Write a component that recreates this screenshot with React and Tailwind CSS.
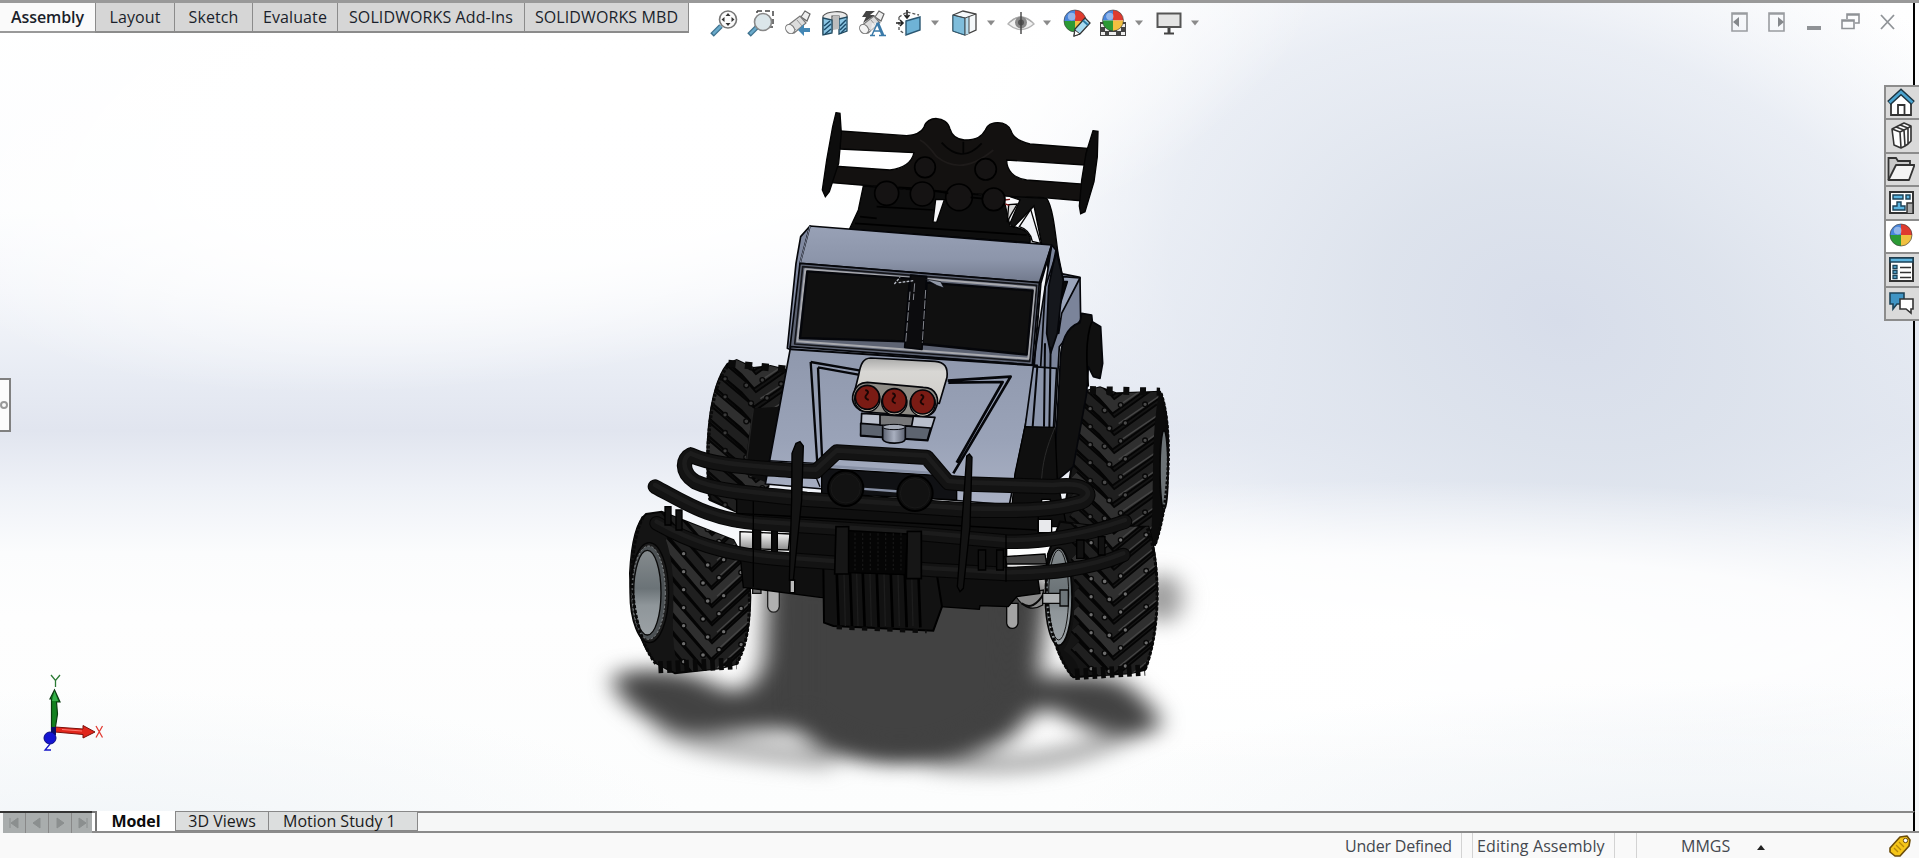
import React from "react";

/* ---------- scene ---------- */

const FL_TYRE = "M78,522 L125,515 L200,545 L340,600 C375,660 396,720 390,800 C388,880 370,930 350,972 L300,985 L165,1000 L110,970 C60,920 30,810 30,700 C35,600 50,545 78,522 Z";
const RL_TYRE = "M322,72 L350,60 L400,84 L452,78 L500,90 L445,440 L360,520 L270,480 C252,350 262,150 322,72 Z";
const RR_TYRE = "M560,152 L600,142 L650,160 L700,158 L780,155 C815,230 815,470 765,615 L480,590 L520,350 Z";
const FR_TYRE = "M445,640 L480,545 L600,560 L745,560 C778,660 785,860 735,990 L690,1000 L520,1012 C450,930 425,760 445,640 Z";

function Tread({ x0, x1, x2, dl, dr, from, to, step = 54, clip, dotColor = "#6e6e6e" }) {
  const rows = [];
  for (let y = from; y < to; y += step) rows.push(y);
  return (
    <g clipPath={`url(#${clip})`}>
      {rows.map((y, i) => (
        <g key={y}>
          <path
            d={`M${x0},${y - 10} L${x1 - 30},${y + dl - 34} L${x1},${y + dl} L${x2},${y + dl - dr}`}
            fill="none"
            stroke="#050505"
            strokeWidth="38"
          />
          <path
            d={`M${x0},${y - 10} L${x1 - 30},${y + dl - 34} L${x1},${y + dl} L${x2},${y + dl - dr}`}
            fill="none"
            stroke={i % 3 === 1 ? "#2f2f2f" : "#1f1f1f"}
            strokeWidth="27"
          />
          <path d={`M${x0},${y + 8} L${x1 - 20},${y + dl + 2}`} stroke="#060606" strokeWidth="5" />
          <path d={`M${x1 + 16},${y + dl - 2} L${x2},${y + dl - dr + 14}`} stroke="#464646" strokeWidth="4" />
        </g>
      ))}
      {rows.map((y, i) => (
        <g key={y} fill={dotColor} stroke="#080808" strokeWidth="4">
          <circle cx={x0 + (x1 - x0) * 0.42} cy={y + dl * 0.42 + 14} r="7" />
          <circle cx={x1 - (i % 2 ? 26 : 12)} cy={y + dl + 12} r="7.500" />
          <circle cx={x1 + (i % 2 ? 22 : 36)} cy={y + dl - 4} r="7" />
          {i % 2 === 0 && <circle cx={x1 + (x2 - x1) * 0.68} cy={y + dl - dr * 0.68 + 8} r="7" />}
        </g>
      ))}
    </g>
  );
}

function Pipe({ d, w = 38 }) {
  return (
    <g fill="none" strokeLinecap="round" strokeLinejoin="round">
      <path d={d} stroke="#050505" strokeWidth={w} />
      <path d={d} stroke="#131313" strokeWidth={w - 6} />
      <path d={d} stroke="#1c1c1c" strokeWidth={w * 0.3} transform="translate(0 -5)" />
    </g>
  );
}

function Backdrop() {
  return (
    <g>
      <rect width="1919" height="812" fill="url(#sky)" />
      <rect width="1919" height="812" fill="url(#haze)" />
      <rect width="1919" height="812" fill="url(#glow)" />
      <rect width="1919" height="812" fill="url(#floor)" />
      <rect width="1919" height="812" fill="url(#cornerL)" />
      <rect width="1919" height="812" fill="url(#cornerR)" />
    </g>
  );
}

function GroundShadow() {
  return (
    <g transform="translate(580 560) scale(.40816 .33333)">
      <g filter="url(#soft)">
        <path d="M200,490 C280,570 440,570 620,600" fill="none" stroke="#777" strokeOpacity=".6" strokeWidth="60" />
        <path d="M850,600 C1050,630 1200,610 1370,500" fill="none" stroke="#777" strokeOpacity=".7" strokeWidth="50" />
        <ellipse cx="1425" cy="115" rx="50" ry="75" fill="#777" fillOpacity=".75" />
        <path
          d="M460,20 L1150,60 L1125,350 C1180,350 1270,335 1335,370 C1400,430 1440,490 1405,515 C1320,535 1230,510 1170,455 C1120,430 1090,480 1060,530 C980,580 900,605 780,610 C660,605 590,575 540,515 C440,495 330,535 240,515 C150,480 60,390 90,340 C180,320 270,330 330,375 C380,410 425,400 450,300 Z"
          fill="#424242"
        />
      </g>
      <path d="M540,60 L1070,60 L1050,440 C960,540 860,570 780,572 C680,565 610,520 540,450 Z" fill="#424242" filter="url(#soft)" />
    </g>
  );
}

function RearWheels() {
  return (
    <>
      <g transform="translate(620 340) scale(.33333)">
        <path d={RL_TYRE} fill="#141414" stroke="#050505" strokeWidth="6" />
        <Tread x0={250} x1={405} x2={520} dl={130} dr={80} from={-60} to={480} clip="rl" dotColor="#3a3a3a" />
        <path d="M325,70 L500,88" stroke="#0a0a0a" strokeWidth="22" strokeDasharray="22 28" />
        <path d="M322,80 C265,150 255,350 270,480" fill="none" stroke="#0a0a0a" strokeWidth="10" strokeDasharray="8 5" />
        <path d="M400,205 L480,200 L445,430 L370,400 Z" fill="#0e0e0e" />
        <path d="M400,205 L375,400" stroke="#222" strokeWidth="4" />
      </g>
      <g transform="translate(900 340) scale(.33333)">
        <path d={RR_TYRE} fill="#141414" stroke="#050505" strokeWidth="6" />
        <Tread x0={520} x1={640} x2={780} dl={105} dr={100} from={40} to={560} clip="rr" dotColor="#4a4a4a" />
        <path d="M570,150 L780,155" stroke="#0a0a0a" strokeWidth="24" strokeDasharray="18 32" />
        <path d="M776,165 C750,300 765,450 752,600 L770,610 C815,470 815,240 785,160 Z" fill="#0b0b0b" />
        <ellipse cx="792" cy="390" rx="12" ry="118" fill="#6c7376" stroke="#050505" strokeWidth="5" />
        <path d="M783,160 C815,250 815,470 765,615" fill="none" stroke="#0a0a0a" strokeWidth="9" strokeDasharray="9 5" />
      </g>
    </>
  );
}

function Spoiler() {
  return (
    <g transform="translate(780 100) scale(.33333)" stroke="#030303" strokeWidth="4">
      <path d="M250,258 L235,330 L208,388 L750,428 C755,400 735,385 690,378 L670,290 Z" fill="#0e0e0e" />
      <path d="M690,290 L800,295 C818,320 825,390 834,460 L848,530 L820,560 L785,432 L762,318 L700,382 L690,370 L720,300 Z" fill="#121212" />
      <path d="M752,328 L782,430 L757,424 C752,400 735,385 718,380 Z" fill="#f2f4f8" />
      <path d="M686,314 L712,312 L692,346 L682,366 Z" fill="#d8d8d8" />
      <path d="M674,300 L690,298 M676,312 L688,316" stroke="#7b1818" strokeWidth="4" />
      <path d="M180,93 L380,107 C410,105 425,95 432,82 C440,46 500,46 510,87 C515,105 530,118 553,120 C590,120 605,110 616,90 C625,60 680,60 693,92 C698,110 720,125 750,132 L922,145 L915,195 L680,180 C680,210 700,235 740,240 L908,252 L902,302 L780,292 L700,290 L280,258 L155,248 L158,198 L330,210 C370,205 395,190 402,158 L180,147 Z" fill="#131110" />
      <path d="M168,38 L180,40 L184,100 L176,190 L148,275 L136,290 L127,270 L140,180 L158,80 Z" fill="#0d0d0d" />
      <path d="M939,92 L954,94 L952,170 L942,245 L915,335 L902,341 L898,318 L905,240 L918,160 Z" fill="#0d0d0d" />
      <path d="M470,170 Q545,230 640,150 M420,120 Q440,130 470,170" fill="none" stroke="#1e1b1a" strokeWidth="5" />
      <path d="M485,128 Q545,195 605,130 M550,125 V160" fill="none" strokeWidth="5" />
      {[[435, 202, 31], [617, 208, 32], [320, 280, 36], [427, 282, 36], [537, 292, 40], [641, 298, 34]].map(([x, y, r]) => (
        <circle key={x} cx={x} cy={y} r={r} fill="#151313" stroke="#000" strokeWidth="5" />
      ))}
      <path d="M290,320 L460,330 M240,350 L290,355 M225,370 L740,405 M355,262 L395,264 M465,272 L505,280 M572,292 L608,296" stroke="#000" strokeWidth="5" />
      <path d="M467,298 L493,299 L470,367 L459,366 Z" fill="#f6f6f8" />
    </g>
  );
}

function Cab() {
  return (
    <g transform="translate(780 100) scale(.33333)" stroke="#05060a" strokeWidth="5" strokeLinejoin="round">
      <path d="M815,435 L832,455 L840,520 L900,532 L902,660 L838,740 L820,1060 L750,1000 L760,790 Z" fill="#7b849a" />
      <path d="M850,530 L900,534 L845,640 L836,700 L838,560 Z" fill="#9aa4ba" />
      <path d="M848,545 L862,545 L838,620 Z" fill="#0b0b0b" />
      <path d="M828,450 L850,540 L832,700 L812,760 L800,700 L806,560 Z" fill="#15171c" />
      <path d="M905,640 L935,645 L937,665 L962,680 L968,790 L960,835 L940,830 L925,800 L920,880 L880,1100 L820,1150 L840,800 C840,720 860,680 900,668 Z" fill="#101010" />
      <path d="M935,665 C915,720 920,790 925,860" fill="none" stroke="#000" />
      <path d="M90,378 L62,410 L48,490 L22,745 L34,750 L62,492 Z" fill="#8089a0" />
      <path d="M90,378 L815,435 L778,548 L60,490 Z" fill="url(#roof)" />
      <path d="M90,378 L60,490" stroke="#8089a0" strokeWidth="3" />
      <path d="M60,490 L778,548 L757,795 L30,742 Z" fill="#5d6373" />
      <path d="M68,500 L770,556 L749,784 L44,732 Z" fill="none" stroke="#15161a" strokeWidth="5" />
      <path d="M76,508 L764,563 L745,776 L52,724 Z" fill="none" stroke="#a8a9ae" strokeWidth="6" />
      <path d="M82,514 L390,536 L374,724 L60,714 Z" fill="#101010" strokeWidth="7" />
      <path d="M440,548 L758,572 L740,764 L426,732 Z" fill="#101010" strokeWidth="7" />
      <path d="M392,525 L440,530 L426,748 L374,742 Z" fill="#0c0c0e" />
      <path d="M390,575 L377,728 M404,550 L400,600 M437,570 L427,728" stroke="#85878e" strokeWidth="3" strokeDasharray="26 5" />
      <path d="M343,552 L360,532 M356,548 L400,542" stroke="#b8bcc6" strokeWidth="4" strokeDasharray="8 4" />
      <path d="M436,537 L482,545 L492,564 L470,556 Z" fill="#9299a8" strokeWidth="2" />
      <path d="M815,435 L782,550 L762,800" fill="none" strokeWidth="6" />
      <path d="M832,452 L796,560 L782,800" fill="none" />
    </g>
  );
}

function Hood() {
  return (
    <g transform="translate(620 340) scale(.33333)" stroke="#05060a" strokeWidth="5" strokeLinejoin="round">
      <path d="M512,20 L1252,76 L1168,495 L436,432 Z" fill="url(#hood)" />
      <path d="M1240,80 L1310,85 L1300,270 L1210,300 Z" fill="#8b95ab" />
      <path d="M1252,80 L1238,260 M1275,10 L1272,260 M1292,20 L1288,270" strokeWidth="6" />
      <path d="M512,28 L1240,76" strokeWidth="6" />
      <path d="M572,66 L592,372 M594,82 L606,350 M572,66 L722,92 M594,82 L715,104" fill="none" strokeWidth="7" />
      <path d="M983,122 L1172,110 L1000,400 M985,128 L1148,126 L1010,368" fill="none" strokeWidth="8" />
      <path d="M445,362 L590,370 M575,380 L600,440" strokeWidth="4" />
      <path d="M725,220 L945,232 L923,302 L722,288 Z" fill="#b9bfcc" />
      <path d="M722,250 L800,256 L795,292 L722,286 Z M855,258 L932,264 L922,300 L850,296 Z" fill="#5d6470" />
      <path d="M780,224 L880,230 L875,258 L780,255 Z" fill="#77787a" />
      <path d="M788,258 H856 V298 C850,314 795,312 788,298 Z" fill="url(#steel)" />
      <ellipse cx="822" cy="261" rx="34" ry="8" fill="#a3a9b5" strokeWidth="3" />
      <path d="M752,54 L945,64 C974,66 984,82 981,112 L958,190 L700,170 L716,105 C722,70 730,55 752,54 Z" fill="url(#scoop)" />
      <path d="M742,127 L910,142 C950,142 962,180 945,210 C935,228 915,230 900,228 L740,216 C706,212 692,185 700,160 C706,140 720,127 742,127 Z" fill="#8e8c86" />
      {[[742, 172], [823, 182], [908, 186]].map(([x, y]) => (
        <g key={x}>
          <circle cx={x} cy={y + 5} r="38" fill="#d5cfc0" strokeWidth="4" />
          <circle cx={x} cy={y} r="36" fill="#7a1b14" strokeWidth="5" />
          <path d={`M${x - 6},${y - 22} q14,4 4,14 t6,16`} fill="none" stroke="#1a0504" strokeWidth="6" />
        </g>
      ))}
    </g>
  );
}

function FrontRight() {
  return (
    <g transform="translate(900 340) scale(.33333)">
      <path d="M375,260 L465,262 L472,420 L500,560 L330,560 L345,400 Z" fill="#0f0f0f" stroke="#000" strokeWidth="4" />
      <path d="M465,262 C440,320 425,370 424,440" fill="none" stroke="#2a2a2a" strokeWidth="3" />
      <path d={FR_TYRE} fill="#151515" stroke="#050505" strokeWidth="6" />
      <Tread x0={525} x1={640} x2={785} dl={110} dr={120} from={440} to={940} clip="fr" />
      <path d="M450,640 C470,600 505,620 520,700 C530,800 520,900 490,930 C540,960 540,1000 530,1010 C440,930 425,760 450,640 Z" fill="#101010" />
      <ellipse cx="476" cy="770" rx="40" ry="146" fill="url(#rim)" stroke="#050505" strokeWidth="5" />
      <ellipse cx="476" cy="765" rx="30" ry="135" fill="none" stroke="#111" strokeWidth="3" />
      <path d="M446,640 C425,760 450,930 520,1012 M742,565 C780,660 785,860 735,990" fill="none" stroke="#080808" strokeWidth="9" strokeDasharray="10 5" />
      <path d="M525,1003 L735,990" stroke="#080808" strokeWidth="34" strokeDasharray="14 12" />
      <g stroke="#080808" strokeWidth="4">
        <path d="M320,790 H354 V850 C350,870 324,870 320,850 Z" fill="#a4a4a4" />
        <path d="M345,765 L430,750 L428,795 C400,812 370,808 345,765 Z" fill="#8b8b8b" />
        <path d="M365,790 Q400,815 432,760" fill="none" strokeWidth="6" />
        <path d="M428,760 H485 V790 H428 Z" fill="#b0b3b5" />
        <path d="M480,750 H505 V798 H480 Z" fill="#6d7579" />
      </g>
    </g>
  );
}

function FrontLeft() {
  return (
    <g transform="translate(620 340) scale(.33333)">
      <path d={FL_TYRE} fill="#151515" stroke="#050505" strokeWidth="6" />
      <Tread x0={130} x1={275} x2={405} dl={155} dr={120} from={400} to={920} clip="fl" />
      <path d="M78,535 C150,545 165,700 160,800 C155,900 165,960 180,995 L120,980 C60,920 30,810 30,700 C35,600 50,545 78,535 Z" fill="#141414" />
      <ellipse cx="88" cy="758" rx="58" ry="150" fill="#1c1c1c" stroke="#050505" strokeWidth="4" />
      <ellipse cx="86" cy="758" rx="50" ry="140" fill="#4b5053" stroke="#7e8385" strokeWidth="3" strokeDasharray="8 5" />
      <ellipse cx="82" cy="758" rx="41" ry="127" fill="url(#rim)" stroke="#0a0a0a" strokeWidth="4" />
      <path d="M70,530 C20,620 20,860 110,975 M388,760 C390,860 378,920 350,972" fill="none" stroke="#080808" strokeWidth="9" strokeDasharray="10 5" />
      <path d="M115,982 L350,970" stroke="#080808" strokeWidth="36" strokeDasharray="14 12" />
      <path d="M443,745 H478 V800 C474,822 448,822 443,800 Z" fill="#b0b0b0" stroke="#222" strokeWidth="4" />
      <path d="M398,740 h25 v20 h-25 Z" fill="#666" stroke="#111" strokeWidth="4" />
    </g>
  );
}

function Bumper() {
  return (
    <g transform="translate(620 340) scale(.33333)" stroke="#000" strokeWidth="4">
      <path d="M605,385 L1010,410 L1010,480 L605,460 Z" fill="#101114" />
      <path d="M625,378 L980,402 M720,446 L860,456" stroke="#8790a5" strokeWidth="7" />
      <path d="M350,470 L1255,515 L1255,620 L350,560 Z" fill="#0f0f0f" />
      <path d="M360,575 L510,582 L505,630 L360,625 Z" fill="url(#chrome)" />
      <path d="M398,560 H422 V660 H398 Z M455,560 H472 V660 H455 Z" fill="#0b0b0b" />
      <path d="M510,560 L1160,590 L1160,720 L510,690 Z" fill="#0f0f0f" />
      <path d="M360,640 L1250,690 L1260,760 L1190,770 L1165,800 L1080,797 L1078,808 L960,800 L600,772 L370,742 Z" fill="#0f0f0f" />
      <path d="M510,720 h14 v38 h-14 Z" fill="#bbb" />
      <path d="M1154,650 L1275,642 L1280,672 L1160,672 Z" fill="#444" />
      <path d="M1265,478 h26 v18 h-26 Z M1255,538 h40 v40 h-40 Z" fill="#e8e9ec" />
      <path d="M610,675 L700,688 L950,700 L966,800 L940,872 L640,858 L612,848 Z" fill="#121212" strokeWidth="6" />
      {[650, 690, 728, 770, 812, 854, 895].map((x) => (
        <path key={x} d={`M${x},690 L${x + 6},${862}`} stroke="#000" strokeWidth="8" />
      ))}
      {[672, 710, 750, 792, 834, 875].map((x) => (
        <path key={x} d={`M${x},700 L${x + 4},${858}`} stroke="#1d1d1d" strokeWidth="4" />
      ))}
      <path d="M650,862 L920,874" stroke="#0a0a0a" strokeWidth="12" strokeDasharray="16 22" />
      <Pipe d="M105,440 C200,490 270,540 420,550 L900,582 L1160,605 C1270,608 1400,585 1515,545" w={44} />
      <Pipe d="M110,550 C200,600 300,645 500,658 L940,690 L1160,702 C1290,700 1400,690 1510,645" w={44} />
      <path d="M135,500 h18 v55 h-18 Z M168,510 h18 v60 h-18 Z M1370,600 h22 v55 h-22 Z M1435,590 h20 v55 h-20 Z" fill="#111" />
      <path d="M1075,630 h22 v60 h-22 Z M1130,630 h20 v60 h-20 Z" fill="#111" />
      <path d="M400,470 V740 M1158,585 V725 M350,520 L1250,570" stroke="#000" strokeWidth="4" fill="none" />
      <path d="M648,560 h38 v142 h-42 Z M862,574 h42 v142 h-45 Z" fill="#161616" strokeWidth="5" />
      <path d="M686,572 L862,582 L856,704 L686,698 Z" fill="#050505" />
      {[705, 728, 751, 774, 797, 820, 843].map((x) => (
        <path key={x} d={`M${x},580 V696`} stroke="#151515" strokeWidth="4" strokeDasharray="7 6" />
      ))}
      <Pipe d="M212,345 C280,378 400,382 520,392 L588,394 L650,336 L920,352 L985,428 L1040,432 L1300,440 C1420,425 1425,480 1370,490 C1320,505 1250,515 1040,510 L560,478 C400,460 290,455 225,425 C180,395 190,355 212,345" w={46} />
      <circle cx="677" cy="445" r="53" fill="#0e0e0e" strokeWidth="6" />
      <circle cx="677" cy="445" r="44" fill="#121212" stroke="#1c1c1c" strokeWidth="2" />
      <circle cx="885" cy="460" r="53" fill="#0e0e0e" strokeWidth="6" />
      <circle cx="885" cy="460" r="44" fill="#121212" stroke="#1c1c1c" strokeWidth="2" />
      <path d="M528,310 L540,305 L550,318 L545,480 L520,720 L508,720 L515,480 L516,340 Z" fill="#131313" />
      <path d="M1040,348 L1048,342 L1056,352 L1050,560 L1030,745 L1020,755 L1012,740 L1028,520 Z" fill="#131313" />
    </g>
  );
}

function Triad() {
  return (
    <g>
      <path d="M51.5,730 V699 H50 L54.5,690 L60,702 H56.5 L57.5,714 L55,730 Z" fill="#12801f" stroke="#0a3a10" strokeWidth="1.2" />
      <path d="M54.5,691 L58,701 H52 Z" fill="#35b04a" />
      <path d="M55,727 L83,729 L83,725.5 L95,732 L83,738 L83,734.5 L55,732 Z" fill="#e1261c" stroke="#7c0f0a" strokeWidth="1" />
      <path d="M62,729.5 L82,731" stroke="#ff7a70" />
      <path d="M51,727 h5 v8 h-5 Z" fill="#0b0b66" />
      <circle cx="50" cy="738" r="6" fill="#1414d2" stroke="#0a0a80" />
      <g fill="none" strokeWidth="1.300">
        <path d="M51,675 L55.500,680.500 L60,675 M55.500,680.500 V687" stroke="#2c7a35" />
        <path d="M96,726 L102.500,737.500 M102.500,726 L96,737.500" stroke="#e23b32" />
        <path d="M50,744 L45,750 H51" stroke="#1414c8" />
      </g>
    </g>
  );
}

function Scene() {
  return (
    <svg className="absolute inset-0 h-full w-full" viewBox="0 0 1919 811" preserveAspectRatio="none">
      <defs>
        <linearGradient id="sky" x1="0" y1="0" x2="0" y2="1">
          <stop offset="0" stopColor="#ffffff" />
          <stop offset=".26" stopColor="#fcfdfe" />
          <stop offset=".36" stopColor="#f4f6fa" />
          <stop offset=".46" stopColor="#e8ecf4" />
          <stop offset=".53" stopColor="#e1e5ef" />
          <stop offset=".6" stopColor="#eef1f7" />
          <stop offset=".68" stopColor="#fbfcfd" />
          <stop offset=".76" stopColor="#fefefe" />
          <stop offset="1" stopColor="#fcfdfd" />
        </linearGradient>
        <radialGradient id="glow" gradientUnits="userSpaceOnUse" cx="0" cy="0" r="1" gradientTransform="translate(620 90) rotate(-12) scale(720 270)">
          <stop offset="0" stopColor="#fff" />
          <stop offset=".6" stopColor="#fff" stopOpacity=".9" />
          <stop offset="1" stopColor="#fff" stopOpacity="0" />
        </radialGradient>
        <radialGradient id="haze" gradientUnits="userSpaceOnUse" cx="0" cy="0" r="1" gradientTransform="translate(1560 320) rotate(20) scale(620 430)">
          <stop offset="0" stopColor="#d7ddea" />
          <stop offset=".3" stopColor="#dce2ec" stopOpacity=".95" />
          <stop offset=".65" stopColor="#e3e8f1" stopOpacity=".75" />
          <stop offset="1" stopColor="#edf0f6" stopOpacity="0" />
        </radialGradient>
        <radialGradient id="floor" gradientUnits="userSpaceOnUse" cx="0" cy="0" r="1" gradientTransform="translate(1400 630) scale(900 150)">
          <stop offset="0" stopColor="#fff" />
          <stop offset=".5" stopColor="#fff" stopOpacity=".85" />
          <stop offset="1" stopColor="#fff" stopOpacity="0" />
        </radialGradient>
        <radialGradient id="cornerL" gradientUnits="userSpaceOnUse" cx="0" cy="0" r="1" gradientTransform="translate(100 840) scale(600 150)">
          <stop offset="0" stopColor="#f1f5f8" />
          <stop offset="1" stopColor="#f1f5f8" stopOpacity="0" />
        </radialGradient>
        <radialGradient id="cornerR" gradientUnits="userSpaceOnUse" cx="0" cy="0" r="1" gradientTransform="translate(1700 840) scale(650 160)">
          <stop offset="0" stopColor="#eff3f7" />
          <stop offset="1" stopColor="#eff3f7" stopOpacity="0" />
        </radialGradient>
        <linearGradient id="roof" x1="0" y1="0" x2="0" y2="1">
          <stop offset="0" stopColor="#98a1b6" />
          <stop offset=".6" stopColor="#8c95aa" />
          <stop offset="1" stopColor="#71798c" />
        </linearGradient>
        <linearGradient id="hood" x1="0" y1="0" x2="0" y2="1">
          <stop offset="0" stopColor="#8f98ad" />
          <stop offset=".6" stopColor="#9aa3b8" />
          <stop offset="1" stopColor="#aab1c4" />
        </linearGradient>
        <linearGradient id="scoop" x1="0" y1="0" x2="0" y2="1">
          <stop offset="0" stopColor="#a9a9a8" />
          <stop offset=".3" stopColor="#d8d7d4" />
          <stop offset="1" stopColor="#cfcdc8" />
        </linearGradient>
        <linearGradient id="rim" x1="0" y1="0" x2="0" y2="1">
          <stop offset="0" stopColor="#858b8e" />
          <stop offset=".45" stopColor="#6b7377" />
          <stop offset=".65" stopColor="#8f969a" />
          <stop offset="1" stopColor="#9ba1a5" />
        </linearGradient>
        <linearGradient id="steel">
          <stop offset="0" stopColor="#5b6170" />
          <stop offset=".5" stopColor="#a9b0c0" />
          <stop offset="1" stopColor="#5b6170" />
        </linearGradient>
        <linearGradient id="chrome" x1="0" y1="0" x2="0" y2="1">
          <stop offset="0" stopColor="#fff" />
          <stop offset="1" stopColor="#8a8a8a" />
        </linearGradient>
        <filter id="soft" x="-20%" y="-20%" width="140%" height="140%" colorInterpolationFilters="sRGB">
          <feGaussianBlur stdDeviation="30" />
        </filter>
        <clipPath id="fl"><path d={FL_TYRE} /></clipPath>
        <clipPath id="rl"><path d={RL_TYRE} /></clipPath>
        <clipPath id="rr"><path d={RR_TYRE} /></clipPath>
        <clipPath id="fr"><path d={FR_TYRE} /></clipPath>
      </defs>
      <Backdrop />
      <GroundShadow />
      <RearWheels />
      <Spoiler />
      <Cab />
      <Hood />
      <FrontRight />
      <FrontLeft />
      <Bumper />
      <Triad />
    </svg>
  );
}

/* ---------- icons ---------- */

const Svg = ({ w = 28, h = 28, children, className = "" }) => (
  <svg width={w} height={h} viewBox={`0 0 ${w} ${h}`} className={`shrink-0 ${className}`} fill="none">
    {children}
  </svg>
);

const Ball = ({ cx, cy, r }) => (
  <g>
    <path d={`M${cx},${cy} L${cx},${cy - r} A${r},${r} 0 0 0 ${cx - r},${cy} Z`} fill="#4a86dc" />
    <path d={`M${cx},${cy} L${cx},${cy - r} A${r},${r} 0 0 1 ${cx + r},${cy} Z`} fill="#df3b2f" />
    <path d={`M${cx},${cy} L${cx - r},${cy} A${r},${r} 0 0 0 ${cx},${cy + r} Z`} fill="#2c9a35" />
    <path d={`M${cx},${cy} L${cx + r},${cy} A${r},${r} 0 0 1 ${cx},${cy + r} Z`} fill="#f0c040" />
    <circle cx={cx - r * 0.3} cy={cy - r * 0.4} r={r * 0.35} fill="#fff" fillOpacity=".4" />
    <circle cx={cx} cy={cy} r={r} stroke="#333" strokeOpacity=".6" />
  </g>
);

const ZoomFit = () => (
  <Svg>
    <path d="M11,17 L2,26" stroke="#3b6f8c" strokeWidth="5" />
    <path d="M11,17 L3,25" stroke="#69a9c9" strokeWidth="2.500" />
    <circle cx="18" cy="10.500" r="8.500" fill="#fbfbfb" stroke="#777" strokeWidth="1.600" />
    <path d="M18,4 l2.500,3 h-5z M18,17 l2.500,-3 h-5z M11.500,10.500 l3,-2.500 v5z M24.500,10.500 l-3,-2.500 v5z" fill="#333" />
  </Svg>
);
const ZoomArea = () => (
  <Svg>
    <path d="M10,2 H26 V18 H20 M10,2 V4" stroke="#444" strokeWidth="1.500" strokeDasharray="5 3" />
    <path d="M10,18 L2,26" stroke="#3b6f8c" strokeWidth="5" />
    <path d="M10,18 L3,25" stroke="#69a9c9" strokeWidth="2.500" />
    <circle cx="16" cy="13" r="8.500" fill="#dbe6ea" stroke="#888" strokeWidth="1.600" />
  </Svg>
);
const Scope = () => (
  <>
    <path d="M17,8 L21,2 L26,5 L23,12 Z" fill="#eee" stroke="#666" strokeWidth="1.200" />
    <path d="M3,17 L16,7 L22,14 L10,24 L4,23 Z" fill="#dcdcdc" stroke="#777" strokeWidth="1.200" />
    <path d="M7,16 L13,22 M13,11 L18,17" stroke="#999" />
    <ellipse cx="6" cy="20" rx="4" ry="5" fill="#f4f4f4" stroke="#777" transform="rotate(-40 6 20)" />
  </>
);
const Previous = () => (
  <Svg>
    <Scope />
    <path d="M14,21 L20,15 V19 H26 V23 H20 V27 Z" fill="#4387b5" />
  </Svg>
);
const Section = () => (
  <Svg>
    <path d="M2,7 C6,2 22,1 26,6 L26,9 L18,11 L18,7 L11,7 L11,22 L2,25 Z" fill="#e9e9e9" stroke="#555" strokeWidth="1.200" />
    <path d="M2,9 L11,11 V24 L2,26 Z M18,10 L26,8 V22 L18,25 Z" fill="#8cc6e4" stroke="#234a60" strokeWidth="1.300" />
    <path d="M3,17 L9,12 M3,21 L10,15 M4,25 L10,20 M19,17 L25,11 M19,21 L25,15 M20,24 L25,19" stroke="#1d4c6b" strokeWidth="1.500" />
    <path d="M12,7 h6 v13 l-6,1z" fill="#bdbdbd" />
  </Svg>
);
const Dynamic = () => (
  <Svg>
    <Scope />
    <path d="M8,2 H17 L12,6 H17 L5,14 L8,8 H4 Z" fill="#444" />
    <path d="M14,14 H24 L27,27 H12 Z" fill="#fff" fillOpacity=".5" />
    <path d="M12,26.500 H17 M21,26.500 H28 M14,26 L19.500,14 M15.500,22 H22.500" stroke="#3a7aa9" strokeWidth="1.500" />
    <path d="M19.500,13.500 L25,26.500" stroke="#3a7aa9" strokeWidth="3" />
  </Svg>
);
const Orient = () => (
  <Svg>
    <path d="M4,8 L12,3 L24,6 M4,8 V21 L10,25" stroke="#555" strokeDasharray="3 2" strokeWidth="1.300" />
    <path d="M11,12 L25,8 V21 L11,26 Z" fill="#6fb3d6" stroke="#2b5772" strokeWidth="1.400" />
    <path d="M12,1 V8 M9.500,6 L12,9 L14.500,6 M1,14 H7 M5,11 L8,14 L5,17" stroke="#222" strokeWidth="1.600" />
  </Svg>
);
const Cube = () => (
  <Svg>
    <path d="M2,6 L12,2 L25,5 V21 L14,26 L2,22 Z" fill="#f5f9fb" stroke="#444" strokeWidth="1.300" />
    <path d="M2,6 L14,9 V26 L2,22 Z" fill="#7fbddb" stroke="#2d5e79" />
    <path d="M14,9 L18,7.500 V24.500 L14,26 Z" fill="#b9ddee" />
    <path d="M2,6 L14,9 L25,5 M14,9 V26 M18,7.500 V24" stroke="#444" />
  </Svg>
);
const Eye = () => (
  <Svg>
    <path d="M1,15 Q14,1 27,15 Q14,26 1,15 Z" fill="#f1f1f1" stroke="#b5b5b5" strokeWidth="1.400" />
    <path d="M1,14 Q14,1 27,14 L24,13 Q14,5 4,13 Z" fill="#aaa" />
    <circle cx="14" cy="13.500" r="6" fill="#8a8a8a" />
    <circle cx="14" cy="13.500" r="3" fill="#555" />
    <path d="M14,3 V25" stroke="#444" strokeWidth="1.400" />
  </Svg>
);
const Appearance = () => (
  <Svg>
    <Ball cx={12} cy={12} r={11} />
    <path d="M22,9 L27,14 L17,25 L11,27 L12,20 Z" fill="#a7dcf2" stroke="#333" strokeWidth="1.300" />
    <path d="M11,27 L12,21 L17,25 Z" fill="#fff" stroke="#333" />
    <path d="M20,11.500 L25,16" stroke="#2b7aa5" strokeWidth="2" />
  </Svg>
);
const SceneIcon = () => (
  <Svg>
    <path d="M1,13 H27 V27 H1 Z" fill="#444" />
    <path d="M2,15 h4 v3 h-4z M22,15 h4 v3 h-4z M6,19 h4 v3 h-4z M18,19 h4 v3 h-4z M2,23 h4 v3 h-4z M10,23 h7 v3 h-7z M22,23 h4 v3 h-4z" fill="#eee" />
    <Ball cx={14} cy={11.5} r={10.5} />
  </Svg>
);
const Monitor = () => (
  <Svg>
    <path d="M1.500,3.500 H26.500 V19 H1.500 Z" fill="#555" />
    <path d="M3.500,5.500 H24.500 V17 H3.500 Z" fill="#e4e4e4" />
    <path d="M14,19 V24" stroke="#444" strokeWidth="3" />
    <path d="M9,24.500 H19" stroke="#444" strokeWidth="2" />
  </Svg>
);
const Caret = ({ className = "" }) => (
  <Svg w={8} h={6} className={className}>
    <path d="M0,0.500 H8 L4,5.500 Z" fill="#8a8a8a" />
  </Svg>
);

const Home = () => (
  <Svg>
    <path d="M4,13 V27 H24 V13 L14,4 Z" fill="#fff" stroke="#333" strokeWidth="1.800" />
    <path d="M11,27 V17 H17.500 V27" stroke="#333" strokeWidth="1.800" />
    <path d="M2,15 L14,4 L26,15" stroke="#1c3340" strokeWidth="5.500" />
    <path d="M2.500,14.500 L14,4 L25.500,14.500" stroke="#4aa3cf" strokeWidth="2.600" />
  </Svg>
);
const Library = () => (
  <Svg>
    <path d="M5,8 L19,2 L23,5 V21 L14,27 L6,24 Z" fill="#fff" />
    <path d="M5,8 L13,11 L14,27 L7,24 Z M13,11 L17,9 L18,25 L14,27 M17,9 L21,7 V23 L18,25 M21,7 L24,5 V20 L21,23 M5,8 L9,6 L17,9 M9,6 L13,4 L21,7 M13,4 L17,2 L24,5" stroke="#333" strokeWidth="1.600" strokeLinejoin="round" />
  </Svg>
);
const Folder = () => (
  <Svg>
    <path d="M1.500,25 V3 H9 L11,6 H23 V10" fill="#c9c9c9" stroke="#333" strokeWidth="1.800" />
    <path d="M1.500,25 L9,10 H27.500 L22,25 Z" fill="#f5f5f5" stroke="#333" strokeWidth="1.800" strokeLinejoin="round" />
  </Svg>
);
const Palette = () => (
  <Svg>
    <path d="M3,4 H26 V25 H3 Z" fill="#fff" stroke="#333" strokeWidth="2" />
    <path d="M6,7 h10 v4 h-10z M19,7 h4 v4 h-4z M10,14 h4 v4 h4 v4 H6 v-4 h4z" fill="#5db5e0" stroke="#1c4257" strokeWidth="1.400" />
    <path d="M20,25 V15 H26 V25" fill="#aaa" stroke="#333" strokeWidth="1.500" />
  </Svg>
);
const BallIcon = () => (
  <Svg>
    <Ball cx={14} cy={14} r={11} />
  </Svg>
);
const Props = () => (
  <Svg>
    <path d="M3,3 H26 V26 H3 Z" fill="#fff" stroke="#333" strokeWidth="2" />
    <path d="M3,3 H26 V7 H3 Z" fill="#5db5e0" stroke="#1c4257" strokeWidth="1.500" />
    <path d="M13,12.500 H24 M13,17.500 H24 M13,22.500 H24" stroke="#333" strokeWidth="1.700" />
    <path d="M6,10.500 h4 v3 h-4z M6,15.500 h4 v3 h-4z M6,20.500 h4 v3 h-4z" fill="#5db5e0" stroke="#1c4257" strokeWidth="1.300" />
  </Svg>
);
const Forum = () => (
  <Svg>
    <path d="M3,5 H17 V16 H10 L6,21 V16 H3 Z" fill="#3f94c4" stroke="#1c4257" strokeWidth="1.600" />
    <path d="M13,11 H26 V21 H24 V25 L19,21 H13 Z" fill="#fff" stroke="#333" strokeWidth="1.600" />
  </Svg>
);

/* ---------- chrome ---------- */

const TABS = [
  { label: "Layout", box: "w-[79px]" },
  { label: "Sketch", box: "w-[78px]" },
  { label: "Evaluate", box: "w-[85px]" },
  { label: "SOLIDWORKS Add-Ins", box: "w-[187px]" },
  { label: "SOLIDWORKS MBD", box: "w-[165px]" },
];

function CommandTabs() {
  return (
    <nav className="flex h-[30px] text-[16px] text-[#1a1f2b]">
      <div className="flex w-[95px] items-center justify-center border-b-2 border-[#999] bg-[#fafafa] pb-px font-semibold tracking-[-0.1px]">Assembly</div>
      {TABS.map((t) => (
        <div key={t.label} className={`flex items-center justify-center whitespace-nowrap border-b-2 border-l border-[#8b8b8b] bg-[#d6d6d6] pb-px tracking-[0.1px] last:border-r ${t.box}`}>
          {t.label}
        </div>
      ))}
    </nav>
  );
}

function HeadsUp() {
  return (
    <div className="flex h-[28px] items-center gap-2">
      <div className="flex gap-[9px]">
        <ZoomFit />
        <ZoomArea />
        <Previous />
        <Section />
        <Dynamic />
        <Orient />
      </div>
      <Caret className="mr-1" />
      <Cube />
      <Caret className="mr-1" />
      <Eye />
      <Caret className="mr-1" />
      <Appearance />
      <SceneIcon />
      <Caret className="mr-1" />
      <Monitor />
      <Caret />
    </div>
  );
}

function WindowButtons() {
  return (
    <div className="flex items-center gap-[17px]">
      <Svg w={20} h={20}>
        <path d="M2,1 H17 V19 H2 Z M2,2 H17" stroke="#999ca0" strokeWidth="1.600" />
        <path d="M9,5 V15 L3,10 Z" fill="#85888c" />
      </Svg>
      <Svg w={20} h={20}>
        <path d="M2,1 H17 V19 H2 Z M2,2 H17" stroke="#999ca0" strokeWidth="1.600" />
        <path d="M11,5 V15 L17,10 Z" fill="#85888c" />
      </Svg>
      <Svg w={20} h={20}>
        <path d="M3,14 H17 V18 H3 Z" fill="#8f9296" />
      </Svg>
      <Svg w={20} h={20}>
        <path d="M6,7 V2 H18 V11 H14 M1,8 H13 V16.500 H1 Z M1,9 H13 M6,3 H18" stroke="#8f9296" strokeWidth="1.600" />
      </Svg>
      <Svg w={20} h={20}>
        <path d="M3,3 L16,17 M16,3 L3,17" stroke="#909498" strokeWidth="1.800" />
      </Svg>
    </div>
  );
}

const PANES = [Home, Library, Folder, Palette, BallIcon, Props, Forum];

function TaskPane() {
  return (
    <aside className="flex h-[236px] w-[35px] flex-col border-l-2 border-t-2 border-[#8c8c8c]">
      {PANES.map((Icon, i) => (
        <div key={i} className={`flex min-h-0 flex-1 items-center border-b-2 border-[#8c8c8c] pb-[2px] pl-px ${i === 4 ? "bg-white" : "bg-[#dadada]"}`}>
          <Icon />
        </div>
      ))}
    </aside>
  );
}

const NAV = ["M7,5 V15 M15,5 V15 L8,10 Z", "M14,5 V15 L7,10 Z", "M8,5 V15 L15,10 Z", "M15,5 V15 M7,5 V15 L14,10 Z"];

function ModelTabs() {
  return (
    <div className="flex h-[22px] bg-[#f6f7f7] text-[16px] leading-none text-[#1a1a1a]">
      <div className="flex w-[92px] border-t-2 border-[#333] pl-[3px]">
        {NAV.map((d) => (
          <span key={d} className="flex flex-1 items-center justify-center border-r border-[#888] bg-[#a9adad]">
            <Svg w={22} h={20}>
              <path d={d} fill="#8b8f8f" stroke="#8b8f8f" />
            </Svg>
          </span>
        ))}
      </div>
      <div className="flex flex-1 border-b-2 border-[#8b8b8b]">
        <div className="w-[5px] border-r-2 border-t-2 border-[#777] bg-white" />
        <div className="flex w-[78px] items-center justify-center bg-white font-bold tracking-[-0.1px] text-[#0c0c0c]">Model</div>
        <div className="flex h-[20px] w-[94px] items-center justify-center border border-[#888] bg-[#dcdede]">3D Views</div>
        <div className="flex h-[20px] w-[149px] items-center border border-l-0 border-[#888] bg-[#dcdede] pl-[14px]">Motion Study 1</div>
        <div className="mr-[4px] flex-1 border-r-2 border-t-2 border-r-black border-t-[#888]" />
      </div>
    </div>
  );
}

function StatusBar() {
  return (
    <footer className="flex h-[25px] items-center bg-[#f9f9f9] text-[16px] leading-[27px] text-[#44484f]">
      <span className="ml-[1345px] w-[116px] whitespace-nowrap pt-px tracking-[-0.2px]">Under Defined</span>
      <span className="h-full w-[12px] border-x border-[#d3d3d3]" />
      <span className="h-full w-[142px] whitespace-nowrap border-r border-[#d3d3d3] pl-[4px] tracking-[0.1px]">Editing Assembly</span>
      <span className="h-full w-[22px] border-r border-[#d3d3d3]" />
      <span className="ml-[44px] w-[75px] pt-px">MMGS</span>
      <Svg w={10} h={7} className="mt-1">
        <path d="M1,6 L5,1 L9,6 Z" fill="#222" />
      </Svg>
      <Svg w={24} h={24} className="ml-[122px]">
        <path d="M12,3 L19,2 L22,6 L21,12 L12,22 L7,22 L2,18 L2,14 Z" fill="#f5c518" stroke="#6b4c08" strokeWidth="1.600" strokeLinejoin="round" />
        <circle cx="17.500" cy="6.500" r="2.200" fill="#fff" stroke="#6b4c08" />
        <path d="M11,8 L16,13 M8,11 L13,16 M6,14 L10,18" stroke="#b88908" strokeWidth="1.300" />
      </Svg>
    </footer>
  );
}

export default function App() {
  return (
    <div className="flex h-[858px] w-full flex-col overflow-hidden bg-white font-['Open_Sans','Noto_Sans',sans-serif]">
      <main className="relative h-[811px] shrink-0">
        <Scene />
        <div className="relative flex h-full flex-col">
          <header className="flex h-[43px] shrink-0 border-t-[3px] border-[#999]">
            <CommandTabs />
            <div className="mr-[4px] flex flex-1 justify-between border-r-2 border-black pt-[6px]">
              <div className="pl-[21px]">
                <HeadsUp />
              </div>
              <div className="pr-[15px] pt-[3px]">
                <WindowButtons />
              </div>
            </div>
          </header>
          <div className="flex flex-1 justify-between">
            <div className="mt-[335px] flex h-[54px] w-[11px] items-center border-2 border-l-0 border-[#808080] bg-[#fbfbfb]">
              <span className="size-[8px] rounded-full border-2 border-[#999]" />
            </div>
            <div className="flex flex-col items-end">
              <div className="mr-[4px] h-[42px] w-[2px] bg-black" />
              <TaskPane />
              <div className="mr-[4px] w-[2px] flex-1 bg-black" />
            </div>
          </div>
        </div>
      </main>
      <ModelTabs />
      <StatusBar />
    </div>
  );
}
